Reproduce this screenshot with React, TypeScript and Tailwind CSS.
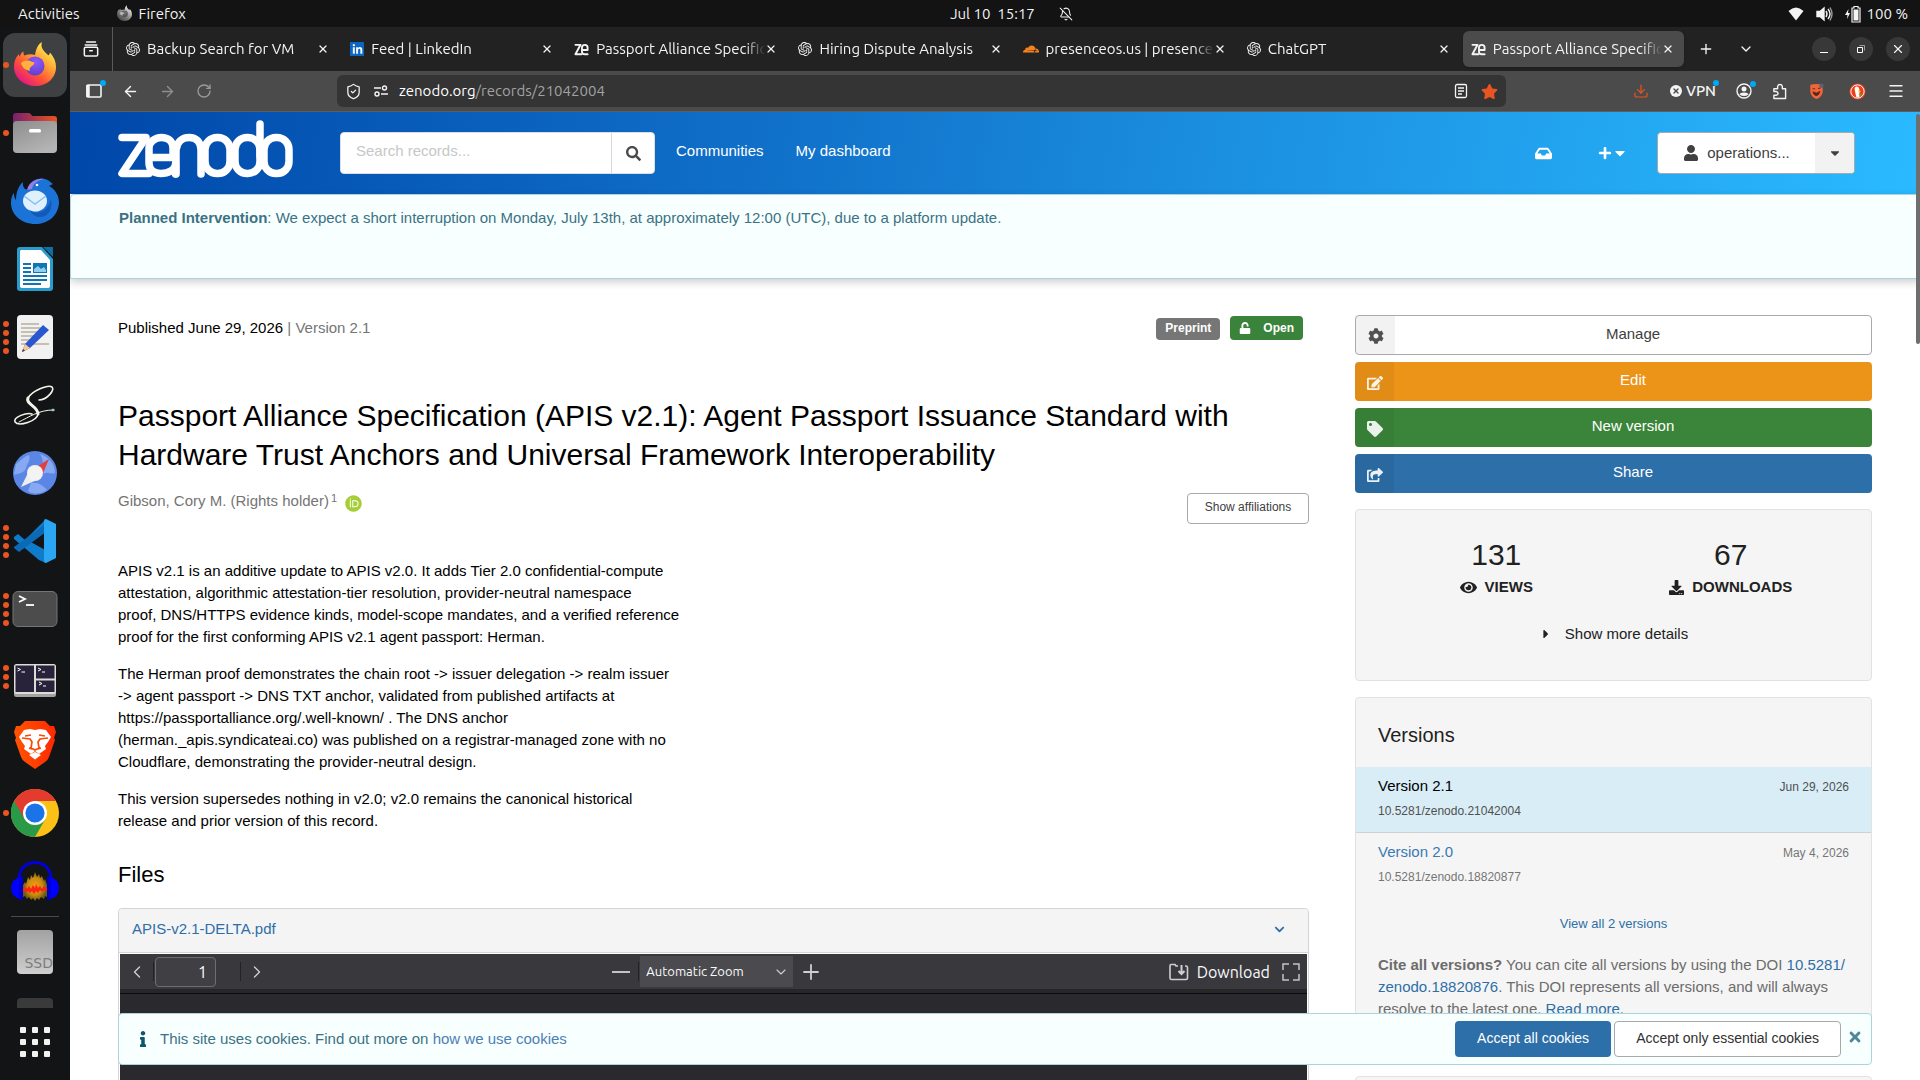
import React, { useState } from 'react';
import {
  FaCaretDown, FaCaretRight, FaChevronDown, FaCog, FaDownload, FaEdit, FaEye, FaInbox, FaInfo, FaPlus,
  FaSearch, FaShareSquare, FaStar, FaTag, FaTimes, FaUnlock, FaUser, FaOrcid, FaLinkedinIn,
} from 'react-icons/fa';
import { SiOpenai, SiCloudflare } from 'react-icons/si';
import { ArrowLeft, ArrowRight, RotateCw, BellOff, ChevronDown, ChevronLeft, ChevronRight, Plus, X, Menu, ShieldCheck, Download } from 'lucide-react';

/* ---------- Logos ---------- */

function ZenodoLogo() {
  return (
    <svg viewBox="0 0 175 58" className="h-[58px] w-[175px]" fill="none" stroke="#fff" strokeWidth="7.5" strokeLinecap="round" strokeLinejoin="round" role="img" aria-label="Zenodo">
      <path d="M4 17.500H28L4 53.500H31" />
      <path d="M31 37.500H55V28C55 21 50 17.500 43.500 17.500S31 22 31 28V43C31 50 36 53.500 43 53.500C50 53.500 57.500 50 57.500 44V54" />
      <path d="M58 54V30C59 22 64 17.500 71 17.500S83 22 83 30V54" />
      <rect x="87" y="17.500" width="25" height="36" rx="12" />
      <rect x="117" y="17.500" width="25" height="36" rx="12" />
      <path d="M142 4V36" />
      <rect x="146" y="17.500" width="25" height="36" rx="12" />
    </svg>
  );
}

function ZeIcon() {
  return (
    <svg viewBox="0 0 16 16" className="size-[15px]" fill="none" stroke="#f4f4f4" strokeWidth="2" strokeLinecap="round" strokeLinejoin="round">
      <path d="M1.500 3H7L1.500 13H8" />
      <path d="M8.500 8.500H14.500V6C14.500 4 13.300 3 11.500 3S8.500 4 8.500 6V10C8.500 12 9.700 13 11.500 13H14.500" />
    </svg>
  );
}

function FirefoxLogo({ gray = false, className = '' }: { gray?: boolean; className?: string }) {
  return (
    <svg viewBox="0 0 48 48" className={className + (gray ? ' grayscale' : '')}>
      <defs>
        <linearGradient id="ffBody" x1="0.85" y1="0.1" x2="0.2" y2="0.95">
          <stop offset="0" stopColor="#fff44f" /><stop offset="0.35" stopColor="#ffa436" /><stop offset="0.65" stopColor="#ff5634" /><stop offset="1" stopColor="#e31587" />
        </linearGradient>
        <radialGradient id="ffGlobe" cx="0.55" cy="0.3" r="0.8"><stop offset="0" stopColor="#9059ff" /><stop offset="1" stopColor="#5b3bbf" /></radialGradient>
      </defs>
      <path d="M31 1C29 7 33 10 37 14C38 15 38.500 13 39 11.500C43 16 45 21 45 26C45 37 36 45 24.500 45S3 37 3 26C3 20 5 16 8 13C8 14 8.200 15 8.500 15.800C9.500 13 10.500 11.500 12.500 10.500C12.300 12 12.500 13.500 13.500 14.500C17 13 21 13 24 14C25 8 27 3 31 1Z" fill="url(#ffBody)" />
      <circle cx="24" cy="25" r="9.500" fill="url(#ffGlobe)" />
      <path d="M10 22C14 19 18 19 21 21C24 21 24 23 21 25C19 26 18 28 19 30C14 29 11 26 10 22Z" fill="#ffb13b" />
    </svg>
  );
}

function FilesLogo() {
  return (
    <svg viewBox="0 0 48 48" className="size-12">
      <defs>
        <linearGradient id="fbk"><stop offset="0" stopColor="#77216f" /><stop offset="1" stopColor="#e95420" /></linearGradient>
        <linearGradient id="ffr" x2="0.6" y2="1"><stop offset="0" stopColor="#8d8d8d" /><stop offset="1" stopColor="#b4b4b4" /></linearGradient>
      </defs>
      <path d="M2 7Q2 4 5 4H17Q20 4 21 7H43Q46 7 46 10V22H2Z" fill="url(#fbk)" />
      <rect x="2" y="12" width="44" height="32" rx="4" fill="url(#ffr)" />
      <rect x="18" y="20" width="12" height="3.500" rx="1.500" fill="#fff" />
    </svg>
  );
}

function ThunderbirdLogo() {
  return (
    <svg viewBox="0 0 48 48" className="size-12">
      <path d="M17 12C18 4 27 0 34 2C38 3 39 5 42 7L38 9C45 13 48 19 48 26C47 39 37 47 24 47S0 38 0 26C0 21 1 18 3 16C3 20 4 22 5 23C5 15 8 8 12 5C11 9 14 14 17 12Z" fill="#1b73d8" />
      <path d="M16 13C18 5 26 1 33 2C25 4 22 7 21 12Z" fill="#9a7be8" />
      <ellipse cx="24" cy="24" rx="12" ry="10.500" fill="#dff1fd" />
      <path d="M13 19L24 27L35 19" fill="none" stroke="#8cc0ee" strokeWidth="1.500" />
      <path d="M19 33C28 39 37 34 40 22C42 33 37 41 27 40C23 39 20 36 19 33Z" fill="#1259b8" />
      <circle cx="26" cy="8" r="1.300" fill="#fff" />
    </svg>
  );
}

function WriterLogo() {
  return (
    <svg viewBox="0 0 48 48" className="size-12">
      <path d="M9 2H31L42 14V43Q42 46 39 46H9Q6 46 6 43V5Q6 2 9 2Z" fill="#2a9ccb" />
      <path d="M10 5H30L39 15V41Q39 43 37 43H11Q9 43 9 41V6Z" fill="#fff" />
      <path d="M32 2H42V12Z" fill="#0e6fa0" />
      <g fill="#0d76b5">
        <rect x="12" y="18" width="8" height="2" /><rect x="12" y="22" width="8" height="2" /><rect x="12" y="26" width="8" height="2" />
        <rect x="12" y="30" width="24" height="2" /><rect x="12" y="34" width="24" height="2" /><rect x="12" y="38" width="18" height="2" />
        <rect x="22" y="18" width="14" height="10" />
      </g>
      <path d="M23 27V24L27 21L30 24L33 22L35 25V27Z" fill="#8fd0ee" />
    </svg>
  );
}

function EditorLogo() {
  return (
    <svg viewBox="0 0 48 48" className="size-12">
      <rect x="6" y="2" width="36" height="44" rx="4" fill="#f1f1f1" />
      <g fill="#c5c0b1">
        <rect x="10" y="10" width="18" height="2" /><rect x="10" y="14" width="22" height="2" /><rect x="10" y="18" width="20" height="2" />
        <rect x="10" y="22" width="16" height="2" /><rect x="10" y="26" width="12" height="2" /><rect x="10" y="30" width="28" height="2" />
      </g>
      <path d="M11 39L14 31L32 12L38 17L19 35Z" fill="#2a57d0" />
      <path d="M11 39L14 31L19 35Z" fill="#f7c98b" /><path d="M11 39L12 36L14 37.500Z" fill="#333" />
    </svg>
  );
}

function ScriptLogo() {
  return (
    <svg viewBox="0 0 48 48" className="size-12" fill="none" stroke="#f2f4ea" strokeLinecap="round">
      <path d="M28 19C36 19 44 9 41 6C37 3 21 10 17 17C14 23 27 25 27 33C26 40 8 46 4 41C2 36 16 31 21 33" strokeWidth="1.600" />
      <path d="M17 17C14 23 27 25 27 33" strokeWidth="3" />
      <path d="M8 41C18 36 28 29 42 29" strokeWidth="1" />
      <circle cx="42" cy="29" r="1" stroke="#9fe0d8" />
    </svg>
  );
}

function CompassLogo() {
  return (
    <svg viewBox="0 0 48 48" className="size-12">
      <circle cx="24" cy="24" r="22" fill="#5b86e6" />
      <path d="M5 15C10 12 12 8 18 6C20 12 16 14 15 19C13 24 9 24 3 26ZM29 5C38 8 44 15 44 24C40 26 37 22 33 25C30 20 34 12 29 5ZM20 34C28 33 32 37 36 41C28 46 20 45 17 42Z" fill="#86a9f2" />
      <path d="M38 10L30 29L24 19Z" fill="#e2403f" /><path d="M10 38L19 20L28 30Z" fill="#eee" />
      <circle cx="24" cy="24" r="8" fill="#f3f3f3" />
    </svg>
  );
}

function CodeLogo() {
  return (
    <svg viewBox="0 0 48 48" className="size-12">
      <path d="M35 2L14 23L7 17L3 20V22L28 43L35 46L36 34L18 24L36 14Z" fill="#0f7bcb" />
      <path d="M3 30L36 6L35 15L8 35L3 31Z" fill="#0a6ab5" />
      <path d="M35 2L45 7V41L35 46Q33 46 33 44V4Q33 2 35 2Z" fill="#2aa6f2" />
    </svg>
  );
}

function TerminalLogo() {
  return (
    <svg viewBox="0 0 48 48" className="size-12">
      <rect x="2" y="6.500" width="44" height="35" rx="5" fill="#4c4c4c" stroke="#757575" />
      <path d="M8 11L14 14L8 17" stroke="#fff" strokeWidth="1.800" fill="none" /><path d="M15 20H23" stroke="#fff" strokeWidth="1.800" />
    </svg>
  );
}

function TilixLogo() {
  return (
    <svg viewBox="0 0 48 48" className="size-12">
      <rect x="3" y="12" width="42" height="32" rx="2.500" fill="#a3a3a0" />
      <rect x="3" y="11" width="42" height="30" rx="2.500" fill="#dddcd6" />
      <path d="M4.500 12.500H23V39H4.500ZM25 12.500H43.500V25.500H25ZM25 27.500H43.500V39H25Z" fill="#28233a" />
      <g fill="none" stroke="#fff" strokeWidth="1"><path d="M6.500 15L9.500 16.500L6.500 18M10.500 19H14" /><path d="M27 15L30 16.500L27 18M31 19H34" /><path d="M28 29L31 30.500L28 32M32 33H35" /></g>
    </svg>
  );
}

function BraveLogo() {
  return (
    <svg viewBox="0 0 48 48" className="size-12">
      <defs><linearGradient id="brv"><stop offset="0" stopColor="#ff5500" /><stop offset="1" stopColor="#ff2800" /></linearGradient></defs>
      <path d="M14 0H34L39 5L43 5L45 11L43 17L44 19L38 36Q37 39 34 41L24 48L14 41Q11 39 10 36L4 19L5 17L3 11L5 5L9 5Z" fill="url(#brv)" />
      <path d="M24 9L29 8L35 9L40 16L37 21L34 25L35 28L28 33L24 30L20 33L13 28L14 25L11 21L8 16L13 9L19 8Z" fill="#fff" />
      <path d="M18 34L24 31L30 34L24 38.500Z" fill="#fff" />
      <path d="M11 17L19 18L21 21L20 27L24 29L28 27L27 21L29 18L37 17M14 15L20 14M34 15L28 14M18 27L21 28M30 27L27 28" fill="none" stroke="#fb4a08" strokeWidth="1.700" />
    </svg>
  );
}

function ChromeLogo() {
  return (
    <svg viewBox="0 0 48 48" className="size-12">
      <circle cx="24" cy="24" r="24" fill="#fbc116" />
      <path d="M3.200 12A24 24 0 0 0 24 48L34.400 30L24 24Z" fill="#2a9a48" />
      <path d="M3.200 12A24 24 0 0 1 44.800 12H24V24L13.600 30Z" fill="#e33b2e" />
      <circle cx="24" cy="24" r="12" fill="#fff" /><circle cx="24" cy="24" r="9.600" fill="#1a73e8" />
    </svg>
  );
}

function AudacityLogo() {
  return (
    <svg viewBox="0 0 48 48" className="size-12">
      <defs><radialGradient id="wave"><stop offset="0" stopColor="#ff9a10" /><stop offset="0.6" stopColor="#c98c10" /><stop offset="1" stopColor="#6b5a10" /></radialGradient></defs>
      <path d="M8 22C8 0 40 0 40 22" fill="none" stroke="#0000d8" strokeWidth="3" />
      <path d="M12 40V28L14 25L15 27L17 20L19 23L20 18L22 21L24 15L26 20L28 17L29 21L31 19L33 24L34 22L36 28V40L34 39L33 42L30 40L28 43L26 41L24 44L22 41L20 43L18 40L16 42L14 39Z" fill="url(#wave)" />
      <path d="M12 32L15 30L16 32L18 29L20 32L22 28L24 31L25 27L27 31L29 29L31 32L33 29L36 32V34L33 33L31 35L29 33L27 36L25 34L23 37L21 34L19 36L17 34L15 35L12 34Z" fill="#ff2212" />
      <path d="M9 20Q1 22 0 30Q0 40 9 42Z" fill="#0000ff" /><path d="M39 20Q47 22 48 30Q48 40 39 42Z" fill="#0000ff" />
      <rect x="8" y="19" width="4" height="24" rx="2" fill="#0000cc" /><rect x="36" y="19" width="4" height="24" rx="2" fill="#0000cc" />
    </svg>
  );
}

function DiskLogo() {
  return (
    <div className="flex h-11 w-9 items-end justify-end overflow-hidden rounded bg-gradient-to-b from-[#a2a2a2] to-[#cfcfcf] pb-[3px]">
      <span className="font-['DejaVu_Sans'] text-[14px] leading-4 text-[#7d7d7d]">SSD</span>
    </div>
  );
}

/* ---------- Desktop shell ---------- */

const dockApps: { name: string; icon: React.ReactNode; dots: number; active?: boolean }[] = [
  { name: 'Firefox', icon: <FirefoxLogo className="size-12" />, dots: 1, active: true },
  { name: 'Files', icon: <FilesLogo />, dots: 1 },
  { name: 'Thunderbird', icon: <ThunderbirdLogo />, dots: 0 },
  { name: 'LibreOffice Writer', icon: <WriterLogo />, dots: 0 },
  { name: 'Text Editor', icon: <EditorLogo />, dots: 4 },
  { name: 'Script', icon: <ScriptLogo />, dots: 0 },
  { name: 'Web browser', icon: <CompassLogo />, dots: 0 },
  { name: 'Code', icon: <CodeLogo />, dots: 4 },
  { name: 'Terminal', icon: <TerminalLogo />, dots: 4 },
  { name: 'Tilix', icon: <TilixLogo />, dots: 3 },
  { name: 'Brave', icon: <BraveLogo />, dots: 0 },
  { name: 'Chrome', icon: <ChromeLogo />, dots: 1 },
  { name: 'Audacity', icon: <AudacityLogo />, dots: 0 },
];

function Dock() {
  return (
    <nav aria-label="Dock" className="flex w-[70px] shrink-0 flex-col bg-[#131416] pt-[6px]">
      <div className="flex flex-col gap-1 px-[3px]">
        {dockApps.map((app) => (
          <button key={app.name} aria-label={app.name} className={'relative flex h-16 items-center justify-center rounded-xl ' + (app.active ? 'bg-[#3f4041]' : '')}>
            <span className="absolute left-0 flex flex-col gap-[3px]">
              {Array.from({ length: app.dots }, (_, i) => <span key={i} className="size-[6px] rounded-full bg-[#e95420]" />)}
            </span>
            {app.icon}
          </button>
        ))}
      </div>
      <hr className="mx-[11px] my-[3px] border-[#4a4b4c]" />
      <button aria-label="SSD" className="flex h-16 shrink-0 items-center justify-center"><DiskLogo /></button>
      <div className="flex h-6 shrink-0 items-end justify-center overflow-hidden"><span className="h-[10px] w-9 rounded-t bg-[#3a3a3a]" /></div>
      <button aria-label="Show applications" className="mx-auto mt-[19px] grid grid-cols-3 gap-[6px]">
        {Array.from({ length: 9 }, (_, i) => <span key={i} className="size-[6px] rounded-[1px] bg-[#f2f2f0]" />)}
      </button>
    </nav>
  );
}

function TopBar() {
  return (
    <header className="grid h-[27px] shrink-0 grid-cols-[1fr_auto_1fr] items-center bg-[#131313] text-[15px] leading-5 text-[#f2f2f2]">
      <div className="flex items-center pl-[18px]">
        <button>Activities</button>
        <button className="ml-9 flex items-center gap-1.5"><FirefoxLogo gray className="size-[17px]" />Firefox</button>
      </div>
      <div className="flex items-center gap-6 pl-[103px]">
        <button className="whitespace-pre">Jul 10  15:17</button>
        <BellOff className="size-[14px]" strokeWidth={1.8} />
      </div>
      <div className="flex items-center justify-end pr-3">
        <svg viewBox="0 0 16 14" className="mr-3 h-[14px] w-4" fill="#f4f4f4"><path d="M0.500 4Q8 -3 15.500 4L8 13.500Z" /></svg>
        <svg viewBox="0 0 17 16" className="mr-3 h-4 w-[17px]" fill="none" stroke="#f4f4f4" strokeWidth="1.400"><path d="M1 5.500H4L8 2V14L4 10.500H1Z" fill="#f4f4f4" /><path d="M10 5Q12 8 10 11M12 3Q16 8 12 13" /><path d="M14 1.500Q18 8 14 14.500" opacity=".6" /></svg>
        <svg viewBox="0 0 16 18" className="mr-1.5 h-[18px] w-4" fill="#f4f4f4"><path d="M3.500 4L0 10H2.500L2 14L5 8H3Z" /><path d="M7 3H9V1.500H13V3H15V17H7Z" fill="none" stroke="#f4f4f4" strokeWidth="1.200" /><rect x="8.500" y="4.500" width="5" height="11" /></svg>
        <span>100 %</span>
      </div>
    </header>
  );
}

/* ---------- Browser chrome ---------- */

const gpt = <SiOpenai className="size-[14px]" />;
const tabs = [
  { title: 'Backup Search for VM', icon: gpt },
  { title: 'Feed | LinkedIn', icon: <span className="flex size-[14px] items-center justify-center bg-[#0a66c2]"><FaLinkedinIn className="size-[11px]" /></span> },
  { title: 'Passport Alliance Specific', icon: <ZeIcon /> },
  { title: 'Hiring Dispute Analysis', icon: gpt },
  { title: 'presenceos.us | presence', icon: <SiCloudflare className="size-4 text-[#f6821f]" /> },
  { title: 'ChatGPT', icon: gpt },
  { title: 'Passport Alliance Specific', icon: <ZeIcon />, active: true },
];

function TabBar() {
  return (
    <div className="flex h-11 shrink-0 items-center bg-[#222222] pr-[10px] text-[#f4f4f4]">
      <button aria-label="Recent browsing" className="flex h-full w-[43px] shrink-0 items-center justify-center border-r border-[#5a5a5a]">
        <svg viewBox="0 0 18 20" className="h-[18px] w-4" fill="none" stroke="#f4f4f4" strokeWidth="1.700" strokeLinecap="round"><path d="M4 2H14M2.500 5.500H15.500" /><rect x="1.500" y="8" width="15" height="10" rx="1.500" /><path d="M7.500 12H10.500" /></svg>
      </button>
      <div role="tablist" className="flex min-w-0 flex-1 gap-[3px] pl-[5px]">
        {tabs.map((t, i) => (
          <div key={i} role="tab" aria-selected={!!t.active} className={'flex h-9 min-w-0 flex-1 items-center rounded-md pr-[10px] pl-2 ' + (t.active ? 'bg-[#4b4b4b] shadow' : '')}>
            <span className="shrink-0">{t.icon}</span>
            <span className="ml-[7px] min-w-0 flex-1 overflow-hidden text-[15px] leading-5 whitespace-nowrap [mask-image:linear-gradient(to_left,transparent,black_20px)]">{t.title}</span>
            <button aria-label="Close tab" className="shrink-0"><X className="size-3" strokeWidth={2.4} /></button>
          </div>
        ))}
      </div>
      <button aria-label="New tab" className="ml-[10px] p-1"><Plus className="size-4" /></button>
      <button aria-label="List all tabs" className="ml-4 p-1"><ChevronDown className="size-4" /></button>
      <div className="ml-[54px] flex gap-[13px]">
        <button aria-label="Minimize" className="flex size-6 items-end justify-center rounded-full bg-[#383838] pb-2"><span className="h-px w-2 bg-white" /></button>
        <button aria-label="Restore" className="flex size-6 items-center justify-center rounded-full bg-[#383838]"><svg viewBox="0 0 10 10" className="size-2.5" fill="none" stroke="#fff"><path d="M1.500 3.500H6.500V8.500H1.500Z" /><path d="M3.500 1.500H8.500V6.500" opacity=".5" /></svg></button>
        <button aria-label="Close" className="flex size-6 items-center justify-center rounded-full bg-[#383838]"><X className="size-3.5" /></button>
      </div>
    </div>
  );
}

function NavBar() {
  return (
    <div className="flex h-[41px] shrink-0 items-center border-b border-[#5d5d5d] bg-[#4b4b4b] pr-[15px] pl-4 text-[#f4f4f4]">
      <div className="flex items-center gap-[20px]">
        <button aria-label="Sidebar" className="relative">
          <svg viewBox="0 0 16 14" className="h-[14px] w-4" fill="none" stroke="#f4f4f4" strokeWidth="1.600"><rect x="1" y="1" width="14" height="12" rx="1" /><path d="M2 1V13" strokeWidth="3.500" /></svg>
          <span className="absolute -top-1 -right-1 size-[6px] rounded-full bg-[#00a8f5]" />
        </button>
        <button aria-label="Back"><ArrowLeft className="size-[17px]" /></button>
        <button aria-label="Forward" className="text-[#8e8e8e]"><ArrowRight className="size-[17px]" /></button>
        <button aria-label="Reload" className="text-[#9a9a9a]"><RotateCw className="size-4" /></button>
      </div>
      <div className="ml-[125px] flex h-8 min-w-0 flex-1 items-center rounded-md bg-[#343434] px-2">
        <ShieldCheck className="size-[17px] shrink-0" strokeWidth={1.800} />
        <svg viewBox="0 0 16 12" className="ml-[11px] h-3 w-4 shrink-0" fill="none" stroke="#f4f4f4" strokeWidth="1.400"><path d="M1 3H8M8 9H15" /><circle cx="11.500" cy="3" r="2" /><circle cx="4" cy="9" r="2" /></svg>
        <p className="ml-[10px] min-w-0 flex-1 text-[15px] text-[#a3a3a3]"><span className="text-white">zenodo.org</span>/records/21042004</p>
        <svg viewBox="0 0 14 16" className="mr-[13px] h-4 w-[14px]" fill="none" stroke="#f4f4f4" strokeWidth="1.300"><rect x="1.500" y="1.500" width="11" height="13" rx="1.500" /><path d="M4 5H10M4 8H10M4 11H8" /></svg>
        <FaStar className="size-[17px] text-[#e95420]" />
      </div>
      <div className="ml-[127px] flex items-center">
        <button aria-label="Downloads" className="text-[#e95420]"><Download className="size-4" strokeWidth={1.800} /></button>
        <button className="relative ml-[21px] flex items-center gap-1 text-[15px] font-medium">
          <span className="flex size-3 items-center justify-center rounded-full bg-[#f4f4f4]"><X className="size-2 text-[#4b4b4b]" strokeWidth={4} /></span>VPN
          <span className="absolute top-0 -right-[3px] size-[6px] rounded-full bg-[#00a8f5]" />
        </button>
        <button aria-label="Account" className="relative ml-[20px]">
          <svg viewBox="0 0 16 16" className="size-4" fill="none" stroke="#f4f4f4" strokeWidth="1.400"><circle cx="8" cy="8" r="7" /><circle cx="8" cy="6" r="2.500" fill="#f4f4f4" stroke="none" /><path d="M3.500 11.500Q4 9.500 8 9.500T12.500 11.500Q8 14.500 3.500 11.500Z" fill="#f4f4f4" stroke="none" /></svg>
          <span className="absolute -top-0.5 -right-1 size-[6px] rounded-full bg-[#00a8f5]" />
        </button>
        <button aria-label="Extensions" className="ml-[20px]">
          <svg viewBox="0 0 16 18" className="h-[17px] w-[15px]" fill="none" stroke="#f4f4f4" strokeWidth="1.500" strokeLinejoin="round"><path d="M2 16.500V13H4.500Q6.500 12.500 6.500 11T4.500 9H2V6H6V3.500Q6.500 1.500 8.500 1.500T11 3.500V6H14.500V16.500Z" /></svg>
        </button>
        <button aria-label="Mask" className="ml-[22px]">
          <svg viewBox="0 0 16 18" className="h-4 w-[15px]"><path d="M1 2Q8 0 15 2V10Q14 16 8 18Q2 16 1 10Z" fill="#f0663a" /><path d="M3.500 6.500H6.500M9.500 6H12.500M4 10Q8 13 12 9.500Q10 15 7 14Q4.500 13 4 10Z" stroke="#5b2413" strokeWidth="1" fill="#5b2413" /><circle cx="13.500" cy="3" r="2.500" fill="#5d6270" /></svg>
        </button>
        <button aria-label="DuckDuckGo" className="ml-[25px]">
          <svg viewBox="0 0 18 18" className="size-[17px]"><circle cx="9" cy="9" r="8.500" fill="#f03e1b" /><circle cx="9" cy="9" r="7" fill="none" stroke="#fff" strokeWidth="1" /><path d="M7 4Q11 3 11 8V15Q8 16 7.500 14L6 7Q5.500 5 7 4Z" fill="#fff" /><path d="M10 8L13 9L10 10Z" fill="#fdd20a" /><path d="M10 12L13 14V11Z" fill="#4cba3c" /></svg>
        </button>
        <button aria-label="Menu" className="ml-[21px]"><Menu className="size-[18px]" strokeWidth={1.800} /></button>
      </div>
    </div>
  );
}

/* ---------- Record page ---------- */

function SiteHeader() {
  return (
    <header className="flex h-[82px] shrink-0 items-center bg-[linear-gradient(100deg,#0047a9,#1173cb_40%,#1b8fe0_62%,#2abaff)] px-12 text-[15px] text-white">
      <a href="#home" className="pb-2"><ZenodoLogo /></a>
      <form className="ml-[47px] flex h-[42px] w-[315px] overflow-hidden rounded border border-[#dededf] bg-white" onSubmit={(e) => e.preventDefault()}>
        <input aria-label="Search records" placeholder="Search records..." className="min-w-0 flex-1 px-[15px] pb-1 outline-none placeholder:text-[#c7c7c7]" />
        <button aria-label="Search" className="flex w-[43px] items-center justify-center border-l border-[#d8d8d8] text-[#4a4a4a]"><FaSearch className="size-[15px]" /></button>
      </form>
      <a href="#communities" className="ml-[21px] pb-1">Communities</a>
      <a href="#dashboard" className="ml-8 pb-1">My dashboard</a>
      <a href="#inbox" aria-label="Requests" className="ml-auto"><FaInbox className="size-[17px]" /></a>
      <button aria-label="Create" className="ml-[46px] flex items-center"><FaPlus className="size-[14px]" /><FaCaretDown className="size-4" /></button>
      <div className="ml-[29px] flex h-[42px] w-[198px] overflow-hidden rounded border border-[#a9a9a9] bg-white text-[#404040]">
        <button className="flex flex-1 items-center justify-center gap-2 whitespace-nowrap"><FaUser className="size-4" />operations...</button>
        <button aria-label="Account menu" className="flex w-[39px] items-center justify-center bg-[#f2f2f2]"><FaCaretDown className="size-[14px]" /></button>
      </div>
      <span className="w-[17px]" />
    </header>
  );
}

function RecordMain() {
  return (
    <main className="min-w-0">
      <div className="flex h-[26px] items-center justify-between pr-1.5">
        <p>Published June 29, 2026 <span className="text-[#757575]">| Version 2.1</span></p>
        <div className="flex items-end gap-[10px] text-[12px] leading-[20px] font-bold text-white">
          <span className="rounded bg-[#767676] px-[9px] pb-0.5">Preprint</span>
          <span className="flex h-6 items-center gap-3 rounded bg-[#3a833a] px-[9px]"><FaUnlock className="size-3" />Open</span>
        </div>
      </div>
      <h1 className="mt-[55px] text-[30px] leading-[39px]">Passport Alliance Specification (APIS v2.1): Agent Passport Issuance Standard with Hardware Trust Anchors and Universal Framework Interoperability</h1>
      <div className="mt-[19px] flex h-[31px] items-start justify-between">
        <div className="flex h-5 items-center text-[#757575]">
          <a href="#author" className="pb-1">Gibson, Cory M. (Rights holder)</a><sup className="ml-0.5 text-[11px]">1</sup>
          <a href="#orcid" aria-label="ORCID" className="ml-2"><FaOrcid className="size-[17px] text-[#a6ce39]" /></a>
        </div>
        <button className="h-[31px] w-[122px] rounded border border-[#a9a9a9] pb-1 text-[12px] text-[#404040]">Show affiliations</button>
      </div>
      <div className="mt-9 flex flex-col gap-[15px] leading-[22px]">
        <p>
          APIS v2.1 is an additive update to APIS v2.0. It adds Tier 2.0 confidential-compute<br />
          attestation, algorithmic attestation-tier resolution, provider-neutral namespace<br />
          proof, DNS/HTTPS evidence kinds, model-scope mandates, and a verified reference<br />
          proof for the first conforming APIS v2.1 agent passport: Herman.
        </p>
        <p>
          The Herman proof demonstrates the chain root -&gt; issuer delegation -&gt; realm issuer<br />
          -&gt; agent passport -&gt; DNS TXT anchor, validated from published artifacts at<br />
          https://passportalliance.org/.well-known/ . The DNS anchor<br />
          (herman._apis.syndicateai.co) was published on a registrar-managed zone with no<br />
          Cloudflare, demonstrating the provider-neutral design.
        </p>
        <p>
          This version supersedes nothing in v2.0; v2.0 remains the canonical historical<br />
          release and prior version of this record.
        </p>
      </div>
      <h2 className="mt-[29px] text-[22px] leading-7">Files</h2>
      <section className="mt-[19px] rounded-t border border-[#d4d4d5]">
        <button className="flex h-11 w-full items-center justify-between rounded-t border-b border-[#d4d4d5] bg-[#f4f4f4] pr-[23px] pb-0.5 pl-[13px] text-[#2f6fa7]">
          <span>APIS-v2.1-DELTA.pdf</span><FaChevronDown className="size-[11px]" />
        </button>
        <div className="m-px bg-[#2a2a2e] font-['Ubuntu','Noto_Sans',sans-serif]">
          <div className="flex h-[35px] items-center bg-[#38383d] text-[#d0d0d3]">
            <button aria-label="Previous page" className="ml-[7px]"><ChevronLeft className="size-5" strokeWidth={1.600} /></button>
            <span className="ml-1.5 h-[19px] w-px bg-[#222225]" />
            <input aria-label="Page" defaultValue="1" className="ml-px h-[30px] w-[61px] rounded-sm border border-[#6e6e72] bg-[#404044] px-2 text-right text-[16px] text-[#f9f9fa]" />
            <span className="ml-6 h-[19px] w-px bg-[#222225]" />
            <button aria-label="Next page" className="ml-1.5"><ChevronRight className="size-5" strokeWidth={1.600} /></button>
            <button aria-label="Zoom out" className="ml-auto flex h-5 items-center"><span className="h-0.5 w-[18px] bg-[#c4c4c6]" /></button>
            <span className="ml-2 h-[19px] w-px bg-[#222225]" />
            <span className="relative ml-px flex items-center">
              <select aria-label="Zoom" className="h-[31px] w-[153px] appearance-none bg-[#4a4a4f] px-1.5 text-[13px] text-[#f9f9fa]"><option>Automatic Zoom</option></select>
              <ChevronDown className="pointer-events-none absolute right-1 size-4" strokeWidth={1.600} />
            </span>
            <button aria-label="Zoom in" className="mr-auto ml-1.5"><Plus className="size-6" strokeWidth={1.800} /></button>
            <button className="flex items-center gap-2 text-[16px] text-[#f9f9fa]">
              <svg viewBox="0 0 20 18" className="h-[18px] w-5" fill="none" stroke="#d0d0d3" strokeWidth="1.600"><path d="M9 3H7L6 1.500H2Q1 1.500 1 3V15Q1 16.500 2.500 16.500H17Q18.500 16.500 18.500 15V5Q18.500 3 17 3H16" /><path d="M12.500 2V10M9.500 8L12.500 11L15.500 8" strokeWidth="2" /></svg>
              Download
            </button>
            <button aria-label="Presentation mode" className="mr-[7px] ml-3"><svg viewBox="0 0 18 18" className="size-[18px]" fill="none" stroke="#c4c4c6" strokeWidth="1.500"><path d="M1 7V1H7M11 1H17V7M17 11V17H11M7 17H1V11" /></svg></button>
          </div>
          <div className="h-[5px] border-b border-[#0c0c0d] bg-[#27272a]" />
          <div className="h-64" />
        </div>
      </section>
    </main>
  );
}

const actions = [
  { label: 'Manage', icon: FaCog, style: 'h-10 border border-[#a9a9a9] bg-white text-[#404040]' },
  { label: 'Edit', icon: FaEdit, style: 'h-[39px] bg-[#ec9418] text-white' },
  { label: 'New version', icon: FaTag, style: 'h-[39px] bg-[#3a853a] text-white' },
  { label: 'Share', icon: FaShareSquare, style: 'h-[39px] bg-[#2d6fa9] text-white' },
];

const versions = [
  { name: 'Version 2.1', doi: '10.5281/zenodo.21042004', date: 'Jun 29, 2026', current: true },
  { name: 'Version 2.0', doi: '10.5281/zenodo.18820877', date: 'May 4, 2026', current: false },
];

function Stat({ value, label, icon }: { value: string; label: string; icon: React.ReactNode }) {
  return (
    <div className="flex flex-col items-center">
      <span className="text-[30px] leading-9">{value}</span>
      <span className="mt-[3px] flex items-center gap-2 leading-[22px] font-bold">{icon}{label}</span>
    </div>
  );
}

function RecordSidebar() {
  return (
    <aside className="flex min-w-0 flex-col">
      <div className="flex flex-col gap-[7px]">
        {actions.map(({ label, icon: Icon, style }) => (
          <button key={label} className={'flex overflow-hidden rounded ' + style}>
            <span className="flex h-full w-[39px] items-center justify-center bg-black/5 pt-0.5"><Icon className="size-4 opacity-90" /></span>
            <span className="flex-1 self-center pb-0.5">{label}</span>
          </button>
        ))}
      </div>
      <section className="mt-4 h-[172px] rounded border border-[#e2e2e3] bg-[#f5f5f5] pt-[27px] text-[#212121]">
        <div className="grid grid-cols-2 px-[23px]">
          <Stat value="131" label="VIEWS" icon={<FaEye className="size-[17px]" />} />
          <Stat value="67" label="DOWNLOADS" icon={<FaDownload className="size-[15px]" />} />
        </div>
        <button className="mx-auto mt-[25px] flex items-center gap-3 leading-[22px]"><FaCaretRight className="size-[14px]" />Show more details</button>
      </section>
      <section className="mt-4 rounded border border-[#e2e2e3] bg-[#f5f5f5] pb-10">
        <h2 className="px-[22px] pt-[23px] pb-[18px] text-[20px] leading-7 text-[#212121]">Versions</h2>
        {versions.map((v) => (
          <div key={v.name} className={'flex h-[66px] justify-between px-[22px] pt-2 ' + (v.current ? 'border-b border-[#d0d0d3] bg-[#d9edf7] text-[#505050]' : 'text-[#757575]')}>
            <div>
              <a href="#version" className={'block leading-[22px] ' + (v.current ? 'text-black' : 'text-[#3a7ab4]')}>{v.name}</a>
              <a href="#doi" className="mt-[5px] block text-[12px] leading-[18px]">{v.doi}</a>
            </div>
            <span className="text-[12px] leading-6">{v.date}</span>
          </div>
        ))}
        <p className="mt-[15px] text-center text-[13px] leading-5"><a href="#versions" className="text-[#2f6fa7]">View all 2 versions</a></p>
        <p className="mt-5 pr-4 pl-[22px] leading-[22px] text-[#6c6c6c]">
          <b>Cite all versions?</b> You can cite all versions by using the DOI <a href="#doi" className="text-[#2f6fa7]">10.5281/<wbr />zenodo.18820876</a>. This DOI represents all versions, and will always resolve to the latest one. <a href="#more" className="text-[#2f6fa7]">Read more</a>.
        </p>
      </section>
      <section className="mt-[15px] h-24 rounded border border-[#e2e2e3] bg-[#f5f5f5]" />
    </aside>
  );
}

function CookieBar({ onClose }: { onClose: () => void }) {
  return (
    <div role="dialog" aria-label="Cookies" className="absolute inset-x-12 bottom-[15px] flex h-[52px] items-center rounded border border-[#a9d5de] bg-[#f8ffff] pr-[8px] pl-4 text-[#3b7284]">
      <FaInfo className="size-4 text-[#0e566c]" />
      <p className="ml-[9px]">This site uses cookies. Find out more on <a href="#cookies" className="text-[#4c80b4]">how we use cookies</a></p>
      <button onClick={onClose} className="ml-auto h-9 rounded bg-[#2d6fa9] px-[22px] pb-0.5 text-[14px] text-white">Accept all cookies</button>
      <button onClick={onClose} className="ml-[3px] h-9 rounded border border-[#a9a9a9] bg-white px-[21px] pb-0.5 text-[14px] text-[#303030]">Accept only essential cookies</button>
      <button onClick={onClose} aria-label="Close" className="ml-[6px] pb-1 text-[#4f8799]"><FaTimes className="size-4" /></button>
    </div>
  );
}

export default function App() {
  const [cookies, setCookies] = useState(true);
  return (
    <div className="flex h-screen flex-col overflow-hidden bg-white font-['Ubuntu','Noto_Sans',sans-serif]">
      <TopBar />
      <div className="flex min-h-0 flex-1">
        <Dock />
        <div className="flex min-w-0 flex-1 flex-col">
          <TabBar />
          <NavBar />
          <div className="relative flex min-h-0 flex-1 flex-col overflow-hidden font-['Liberation_Sans',Arial,sans-serif] text-[15px] text-black">
            <SiteHeader />
            <div className="h-[85px] shrink-0 rounded-t border border-[#a9d5de] bg-[#f8ffff] px-12 pt-3 leading-[22px] text-[#3b7284] shadow-[0_3px_8px_rgba(0,0,0,0.2)]">
              <strong>Planned Intervention</strong>: We expect a short interruption on Monday, July 13th, at approximately 12:00 (UTC), due to a platform update.
            </div>
            <div className="grid grid-cols-[minmax(0,1191fr)_minmax(0,517fr)] gap-[46px] px-12 pt-9">
              <RecordMain />
              <RecordSidebar />
            </div>
            <div className="absolute top-0.5 right-0 h-[230px] w-1 rounded bg-[#6e6e6e]" />
            {cookies && <CookieBar onClose={() => setCookies(false)} />}
          </div>
        </div>
      </div>
    </div>
  );
}
